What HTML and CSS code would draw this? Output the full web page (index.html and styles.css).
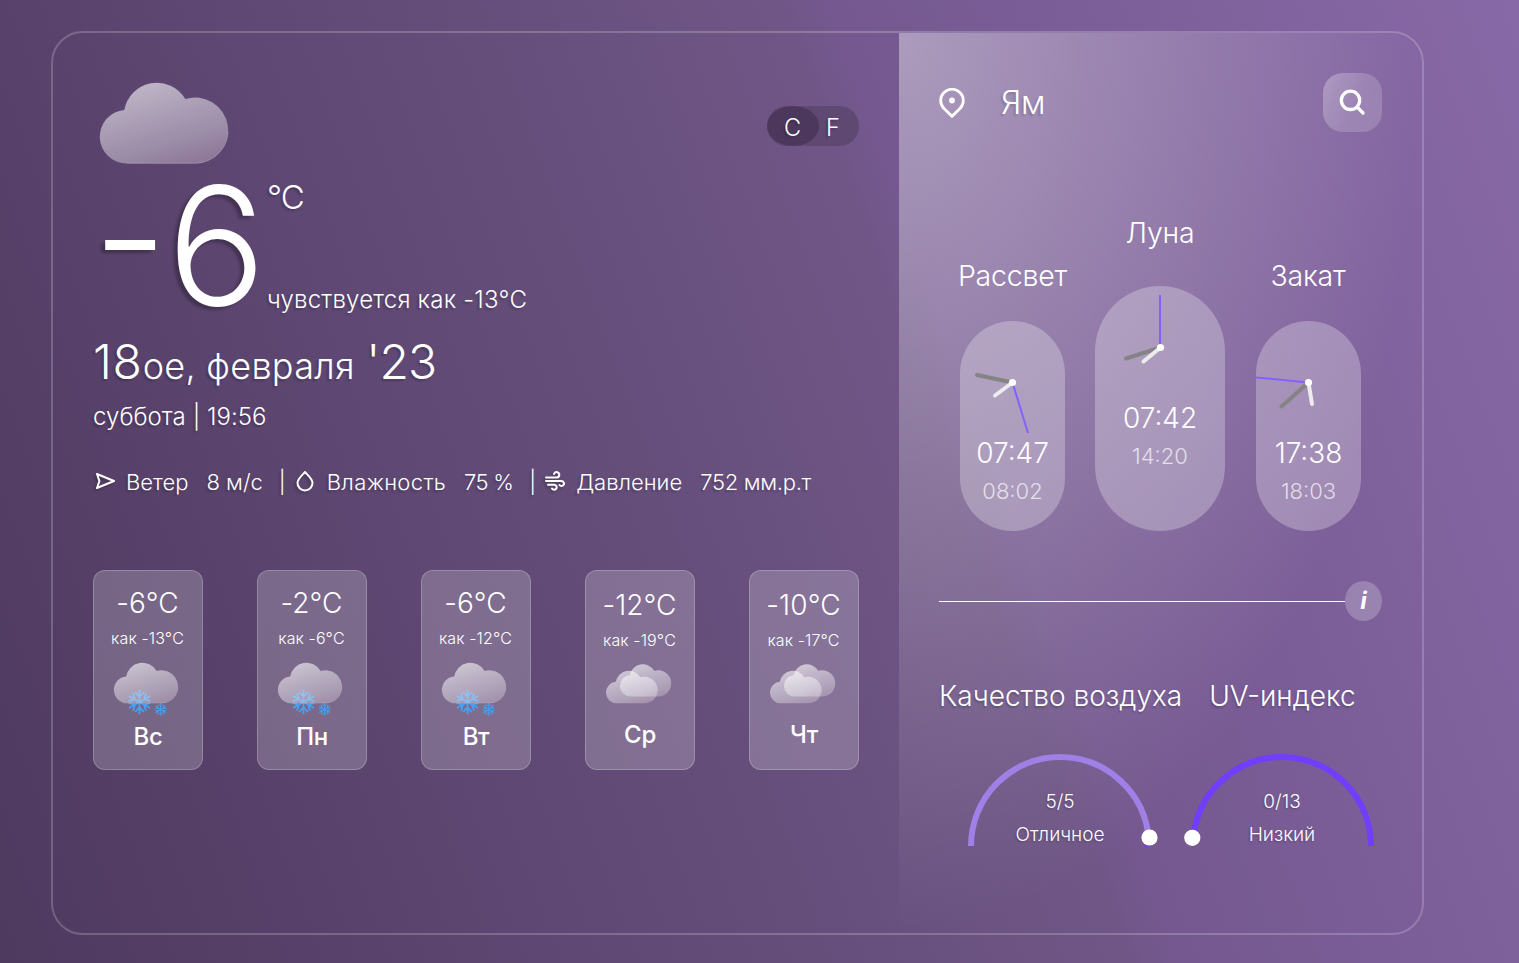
FILE: index.html
```html
<!DOCTYPE html>
<html lang="ru">
<head>
<meta charset="utf-8">
<title>Погода</title>
<link rel="stylesheet" href="styles.css">
</head>
<body>
<svg class="defs" aria-hidden="true">
  <defs>
    <linearGradient id="cloud-fill" x1="0.25" y1="0" x2="0.75" y2="1">
      <stop offset="0" stop-color="#fff" stop-opacity=".62"/>
      <stop offset=".75" stop-color="#e6e2ea" stop-opacity=".44"/>
      <stop offset="1" stop-color="#e6cfdc" stop-opacity=".36"/>
    </linearGradient>
    <path id="cloud-path" d="M27 81.500A26.800 26.800 0 0 1 24.300 28A33 33 0 0 1 85.300 17A33 33 0 1 1 95.500 81.500Z"/>
    <symbol id="cloud" viewBox="0 0 129 82" overflow="visible">
      <use href="#cloud-path" fill="url(#cloud-fill)"/>
      <path d="M27 81.200H95.500A33 33 0 0 0 128.200 50" fill="none" stroke="#fff" stroke-opacity=".2"/>
    </symbol>
    <clipPath id="back-clip"><use href="#cloud-path" transform="translate(13 1) scale(.4)"/></clipPath>
    <path id="arm" d="M12 12V0.300M7.800 2.400L12 7L16.200 2.400"/>
    <symbol id="flake" viewBox="0 0 24 24">
      <g fill="none" stroke="#45a3f5" stroke-width="1.700">
        <use href="#arm"/>
        <use href="#arm" transform="rotate(60 12 12)"/>
        <use href="#arm" transform="rotate(120 12 12)"/>
        <use href="#arm" transform="rotate(180 12 12)"/>
        <use href="#arm" transform="rotate(240 12 12)"/>
        <use href="#arm" transform="rotate(300 12 12)"/>
      </g>
    </symbol>
    <symbol id="snow" viewBox="0 0 66 56" overflow="visible">
      <use href="#flake" x="12" y="27.500" width="25" height="25"/>
      <use href="#flake" x="39.200" y="41" width="13" height="13"/>
      <use href="#cloud" x="-1" y="0.500" width="64.500" height="41"/>
    </symbol>
    <symbol id="overcast" viewBox="0 0 66 56" overflow="visible">
      <use href="#cloud-path" fill="url(#cloud-fill)" transform="translate(13 1) scale(.4)"/>
      <use href="#cloud-path" fill="url(#cloud-fill)" transform="translate(-1 7.500) scale(.403)"/>
      <g clip-path="url(#back-clip)"><use href="#cloud-path" fill="#fff" fill-opacity=".08" transform="translate(-1 7.500) scale(.403)"/></g>
    </symbol>
  </defs>
</svg>

<main class="app">
  <section class="today">
    <header class="today-head">
      <svg class="cloud-big" width="129" height="82"><use href="#cloud" width="129" height="82"/></svg>
      <div class="units"><span class="unit unit-on">C</span><span class="unit">F</span></div>
    </header>
    <div class="temp">
      <div class="temp-value">-6</div>
      <div class="temp-side">
        <div class="temp-unit">°C</div>
        <div class="temp-feels">чувствуется как -13°C</div>
      </div>
    </div>
    <div class="date"><span class="date-num">18</span>ое, февраля <span class="date-num date-year">'23</span></div>
    <div class="time">суббота | 19:56</div>
    <div class="facts">
      <svg class="fact-icon" width="24" height="24" viewBox="0 0 24 24"><path d="M4 5L21 12L4 19L6.4 12Z"/></svg>
      <span class="fact-name">Ветер</span><span class="fact-val">8 м/с</span><span class="bar">|</span>
      <svg class="fact-icon" width="24" height="24" viewBox="0 0 24 24"><path d="M12 3C9.500 6 4.500 9.500 4.500 14A7.500 7.500 0 0 0 19.500 14C19.500 9.500 14.500 6 12 3Z"/></svg>
      <span class="fact-name humidity">Влажность</span><span class="fact-val percent">75 %</span><span class="bar">|</span>
      <svg class="fact-icon" width="24" height="24" viewBox="0 0 24 24"><path d="M3 8.500H13.500A2.700 2.700 0 1 0 11 5M3 12H18.500A2.500 2.500 0 1 1 16.500 16M5 15.700H11.200A2.500 2.500 0 1 1 9 19.500"/></svg>
      <span class="fact-name">Давление</span><span class="fact-val pressure">752 мм.р.т</span>
    </div>
    <div class="days">
      <article class="day"><div class="day-temp">-6°C</div><div class="day-feels">как -13°C</div><svg class="day-icon" width="66" height="56"><use href="#snow" width="66" height="56"/></svg><div class="day-name">Вс</div></article>
      <article class="day"><div class="day-temp">-2°C</div><div class="day-feels">как -6°C</div><svg class="day-icon" width="66" height="56"><use href="#snow" width="66" height="56"/></svg><div class="day-name">Пн</div></article>
      <article class="day"><div class="day-temp">-6°C</div><div class="day-feels">как -12°C</div><svg class="day-icon" width="66" height="56"><use href="#snow" width="66" height="56"/></svg><div class="day-name">Вт</div></article>
      <article class="day day-low"><div class="day-temp">-12°C</div><div class="day-feels">как -19°C</div><svg class="day-icon" width="66" height="56"><use href="#overcast" width="66" height="56"/></svg><div class="day-name">Ср</div></article>
      <article class="day day-low"><div class="day-temp">-10°C</div><div class="day-feels">как -17°C</div><svg class="day-icon" width="66" height="56"><use href="#overcast" width="66" height="56"/></svg><div class="day-name">Чт</div></article>
    </div>
  </section>

  <aside class="side">
    <header class="place">
      <svg class="pin" width="26" height="31" viewBox="0 0 26 31"><path d="M13 28.300L5 20.500A11.300 11.300 0 1 1 21 20.500Z" fill="none" stroke="#fff" stroke-width="2.800"/><circle cx="13" cy="12.500" r="2.900" fill="#fff"/></svg>
      <span class="city">Ям</span>
      <button class="search" aria-label="Поиск"><svg width="28" height="28" viewBox="0 0 28 28"><path d="M20.700 11.300A9.200 9.200 0 1 1 2.300 11.300A9.200 9.200 0 0 1 20.700 11.300ZM18 17.800L24 24" fill="none" stroke="#fff" stroke-width="3.300" stroke-linecap="round"/></svg></button>
    </header>

    <div class="clocks">
      <div class="clock">
        <div class="clock-title">Рассвет</div>
        <div class="capsule">
          <svg class="dial" width="105" height="120" viewBox="0 0 105 120"><path class="minute" d="M52.500 61.500L17 54"/><path class="hour" d="M52.500 61.500L35 74.500"/><path class="second" d="M52.500 61.500L68 112"/><circle cx="52.500" cy="61.500" r="3.600" fill="#fff"/></svg>
          <div class="clock-time">07:47</div><div class="clock-sub">08:02</div>
        </div>
      </div>
      <div class="clock clock-main">
        <div class="clock-title">Луна</div>
        <div class="capsule">
          <svg class="dial" width="130" height="120" viewBox="0 0 130 120"><path class="minute" d="M65.500 61.500L31 72.500"/><path class="hour" d="M65.500 61.500L48.500 75.500"/><path class="second" d="M65 61.500V9"/><circle cx="65.500" cy="61.500" r="3.600" fill="#fff"/></svg>
          <div class="clock-time">07:42</div><div class="clock-sub">14:20</div>
        </div>
      </div>
      <div class="clock clock-set">
        <div class="clock-title">Закат</div>
        <div class="capsule">
          <svg class="dial" width="105" height="120" viewBox="0 0 105 120"><path class="minute" d="M52.500 61.500L25.500 85.500"/><path class="hour" d="M52.500 61.500L56 83"/><path class="second" d="M52.500 61.500L0 56.500"/><circle cx="52.500" cy="61.500" r="3.600" fill="#fff"/></svg>
          <div class="clock-time">17:38</div><div class="clock-sub">18:03</div>
        </div>
      </div>
    </div>

    <div class="divider"><span class="rule"></span><span class="info">i</span></div>

    <div class="gauge-titles"><span>Качество воздуха</span><span>UV-индекс</span></div>
    <div class="gauges">
      <div class="gauge">
        <svg class="arc" width="184" height="92" viewBox="0 0 184 92"><path d="M176 92H181.500" stroke="#713dff" stroke-width="1"/><path d="M3 92A89 89 0 0 1 92 3A89 89 0 0 1 180.800 86" fill="none" stroke="#a080e6" stroke-width="6"/><circle cx="181.500" cy="83.500" r="8.100" fill="#fff"/></svg>
        <div class="gauge-num">5/5</div><div class="gauge-text">Отличное</div>
      </div>
      <div class="gauge">
        <svg class="arc" width="184" height="92" viewBox="0 0 184 92"><path d="M3.360 84A89 89 0 0 1 92 3A89 89 0 0 1 181 92" fill="none" stroke="#713dff" stroke-width="6"/><circle cx="2.300" cy="83.800" r="8.100" fill="#fff"/></svg>
        <div class="gauge-num">0/13</div><div class="gauge-text">Низкий</div>
      </div>
    </div>
  </aside>
</main>
</body>
</html>
```

FILE: styles.css
```css
* { box-sizing: border-box; }
body {
  margin: 0;
  height: 963px;
  overflow: hidden;
  padding: 31px 0 0 51px;
  font-family: Inter, "Liberation Sans", sans-serif;
  font-weight: 300;
  color: #fff;
  background: linear-gradient(70deg, #4e395f 0%, #6f5686 60%, #74588f 63%, #8869a7 100%);
}
.defs { position: absolute; width: 0; height: 0; }
.app {
  display: flex;
  width: 1373px;
  height: 904px;
  border: 2px solid rgba(255, 255, 255, .2);
  border-radius: 32px;
  overflow: hidden;
  background-clip: padding-box;
}
.today {
  width: 846px;
  padding: 40px;
  display: flex;
  flex-direction: column;
  text-shadow: -2px 2px 2px rgba(0, 0, 0, .2);
}
.today-head {
  height: 106px;
  display: flex;
  align-items: center;
  justify-content: space-between;
}
.cloud-big { margin: -6px 0 0 7px; overflow: visible; filter: drop-shadow(1px -1px 3px rgba(110, 80, 130, .35)); }
.units {
  display: flex;
  width: 92px;
  height: 40px;
  border-radius: 20px;
  background: #5f4872;
  font-size: 23.5px;
  line-height: 43px;
}
.unit { padding-left: 7px; }
.unit-on {
  width: 52px;
  padding: 0 1px 0 0;
  border-radius: 50%;
  background: #4d385d;
  text-align: center;
}
.temp { height: 153px; display: flex; }
.temp-value {
  width: 174px;
  font-size: 164px;
  line-height: 134px;
  white-space: nowrap;
  text-shadow: -4px 3px 3px rgba(0, 0, 0, .28);
}
.temp-side { display: flex; flex-direction: column; }
.temp-unit { font-size: 33px; line-height: 30px; margin: 3px 0 75px; letter-spacing: -1px; }
.temp-feels { font-size: 24px; line-height: 25px; letter-spacing: .2px; white-space: nowrap; }
.date { height: 60px; margin-bottom: 9px; font-size: 36px; line-height: 60px; letter-spacing: .3px; }
.date-num { font-size: 48px; letter-spacing: .7px; }
.date-year { margin-left: 1px; letter-spacing: -.9px; }
.time { font-size: 24px; line-height: 31px; margin-bottom: 35px; letter-spacing: .05px; }
.facts { display: flex; height: 30px; font-size: 22px; line-height: 30px; margin-bottom: 73px; white-space: nowrap; }
.fact-icon {
  margin-top: 2px;
  fill: none;
  stroke: #fff;
  stroke-width: 2;
  stroke-linecap: round;
  stroke-linejoin: round;
  filter: drop-shadow(-2px 2px 1px rgba(0, 0, 0, .22));
}
.fact-name { margin: 0 18px 0 9px; }
.humidity { margin-left: 10px; letter-spacing: .35px; }
.percent { letter-spacing: -.7px; }
.pressure { letter-spacing: -.3px; }
.bar { margin: 0 7px 0 16px; }
.days { display: flex; justify-content: space-between; }
.day {
  width: 110px;
  height: 200px;
  padding-top: 15px;
  display: flex;
  flex-direction: column;
  align-items: center;
  border: 1px solid rgba(255, 255, 255, .22);
  border-radius: 12px;
  background: rgba(255, 255, 255, .2);
  text-shadow: none;
}
.day-low { padding-top: 17px; }
.day-temp { font-size: 28px; line-height: 34px; letter-spacing: .1px; margin-left: -1px; }
.day-feels { font-size: 16px; line-height: 20px; margin: 8px 0 14px -1px; letter-spacing: .1px; }
.day-icon { display: block; overflow: visible; }
.day-name { font-size: 24px; line-height: 30px; font-weight: 500; margin-top: 4px; letter-spacing: -.3px; }
.day-low .day-icon { margin-top: -1px; }
.day-low .day-name { margin-top: 1px; }

.side {
  flex: 1;
  padding: 40px;
  background: radial-gradient(ellipse farthest-side at 0 0, rgba(255, 255, 255, .4), rgba(255, 255, 255, 0));
}
.place { display: flex; height: 59px; align-items: center; text-shadow: -2px 2px 2px rgba(0, 0, 0, .15); }
.pin { margin: 1px 36px 0 0; }
.city { font-size: 32px; line-height: 40px; margin-top: 1px; letter-spacing: -.4px; }
.search {
  display: flex;
  align-items: center;
  justify-content: center;
  width: 59px;
  height: 59px;
  margin-left: auto;
  padding: 0;
  border: 0;
  border-radius: 20px;
  background: linear-gradient(115deg, rgba(255, 255, 255, .3), rgba(255, 255, 255, .17) 55%);
}
.clocks {
  height: 399px;
  display: flex;
  justify-content: center;
  align-items: flex-end;
  gap: 30px;
}
.clock { width: 105px; display: flex; flex-direction: column; align-items: center; }
.clock-main { width: 130px; margin-right: 1px; }
.clock-title { font-size: 28.5px; line-height: 34px; margin-bottom: 28px; white-space: nowrap; letter-spacing: -.2px; }
.clock-main .clock-title { margin-bottom: 36px; }
.clock-set .clock-title { margin-right: 1px; }
.capsule {
  width: 100%;
  height: 210px;
  border-radius: 65px;
  background: rgba(255, 255, 255, .27);
  text-align: center;
}
.clock-main .capsule { height: 245px; }
.dial { display: block; margin-bottom: -5px; fill: none; stroke-linecap: round; }
.minute { stroke: #858485; stroke-width: 4; }
.hour { stroke: #ececec; stroke-width: 4; }
.second { stroke: #8560ff; stroke-width: 2; stroke-linecap: butt; }
.clock-time { font-size: 28px; line-height: 34px; }
.clock-sub { font-size: 22px; line-height: 30px; margin-top: 6px; color: rgba(255, 255, 255, .7); }
.divider { display: flex; align-items: center; margin-top: 50px; height: 40px; }
.rule { flex: 1; height: 1px; background: #fff; margin-top: 1px; }
.info {
  width: 37px;
  height: 40px;
  border-radius: 50%;
  background: rgba(255, 255, 255, .22);
  text-align: center;
  font-size: 24px;
  line-height: 40px;
  font-weight: 700;
  font-style: italic;
}
.gauge-titles {
  display: flex;
  gap: 27px;
  margin: 58px 0 41px;
  font-size: 28px;
  line-height: 34px;
  white-space: nowrap;
  text-shadow: -1px 2px 2px rgba(0, 0, 0, .2);
}
.gauges { display: flex; gap: 38px; padding-left: 29px; }
.gauge {
  display: grid;
  width: 184px;
  height: 100px;
  text-align: center;
  font-size: 19px;
  line-height: 24px;
  grid-template-columns: 184px;
  grid-template-rows: 36px 33px 1fr;
  text-shadow: -1px 1px 2px rgba(0, 0, 0, .25);
}
.arc { grid-area: 1 / 1 / 4 / 2; overflow: visible; }
.gauge-num { grid-area: 2 / 1; }
.gauge-text { grid-area: 3 / 1; }
```
